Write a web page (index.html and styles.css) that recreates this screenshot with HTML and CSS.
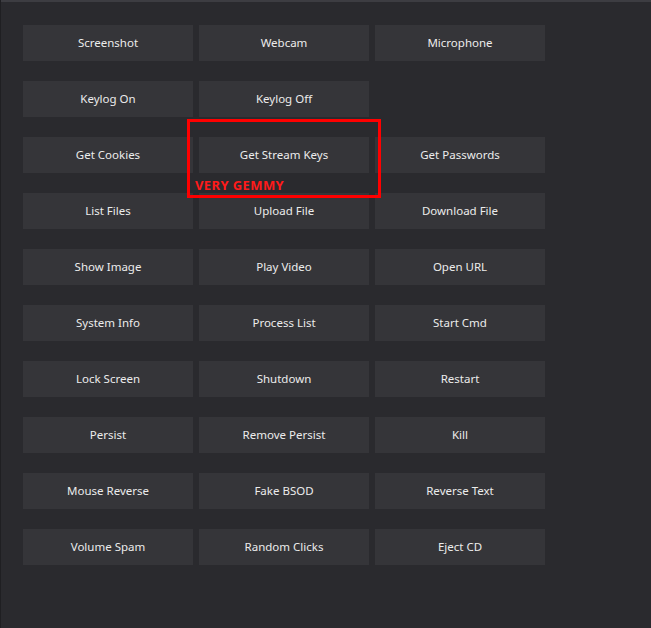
FILE: index.html
```html
<!DOCTYPE html>
<html lang="en">
<head>
    <meta charset="UTF-8">
    <meta name="viewport" content="width=device-width, initial-scale=1.0">
    <title>Panel</title>
    <link rel="stylesheet" href="styles.css">
</head>
<body>
    <div class="topbar"></div>
    <div class="panel">
        <div class="grid">
            <button class="btn">Screenshot</button>
            <button class="btn">Webcam</button>
            <button class="btn">Microphone</button>

            <button class="btn">Keylog On</button>
            <button class="btn">Keylog Off</button>
            <span class="empty"></span>

            <button class="btn">Get Cookies</button>
            <button class="btn">Get Stream Keys</button>
            <button class="btn">Get Passwords</button>

            <button class="btn">List Files</button>
            <button class="btn">Upload File</button>
            <button class="btn">Download File</button>

            <button class="btn">Show Image</button>
            <button class="btn">Play Video</button>
            <button class="btn">Open URL</button>

            <button class="btn">System Info</button>
            <button class="btn">Process List</button>
            <button class="btn">Start Cmd</button>

            <button class="btn">Lock Screen</button>
            <button class="btn">Shutdown</button>
            <button class="btn">Restart</button>

            <button class="btn">Persist</button>
            <button class="btn">Remove Persist</button>
            <button class="btn">Kill</button>

            <button class="btn">Mouse Reverse</button>
            <button class="btn">Fake BSOD</button>
            <button class="btn">Reverse Text</button>

            <button class="btn">Volume Spam</button>
            <button class="btn">Random Clicks</button>
            <button class="btn">Eject CD</button>
        </div>

        <!-- highlight box drawn over the grid -->
        <div class="mark">
            <span class="mark-label">VERY GEMMY</span>
        </div>
    </div>
</body>
</html>
```

FILE: styles.css
```css
html, body {
  margin: 0;
  padding: 0;
  height: 100%;
}

body {
  background-color: #2a2a2e;
  font-family: "Noto Sans", "Open Sans", sans-serif;
  border-left: 1px solid #1f1f22;
  box-sizing: border-box;
}

.topbar {
  height: 2px;
  background-color: #3d3d42;
}

.panel {
  position: relative;
  padding: 23px 0 0 22px;
}

.grid {
  display: grid;
  grid-template-columns: repeat(3, 170px);
  grid-auto-rows: 36px;
  column-gap: 6px;
  row-gap: 20px;
}

.btn {
  background-color: #353539;
  color: #ececec;
  border: none;
  font-family: inherit;
  font-size: 11.5px;
  padding: 0 0 2px 0;
  cursor: pointer;
}

.btn:hover {
  background-color: #3e3e43;
}

.mark {
  position: absolute;
  left: 186px;
  top: 117px;
  width: 188px;
  height: 73px;
  border: 3px solid #ff0000;
}

.mark-label {
  position: absolute;
  left: 5px;
  top: 54px;
  color: #ff1a1a;
  font-family: "Noto Sans", sans-serif;
  font-size: 13px;
  font-weight: bold;
  letter-spacing: 0.4px;
}
```
